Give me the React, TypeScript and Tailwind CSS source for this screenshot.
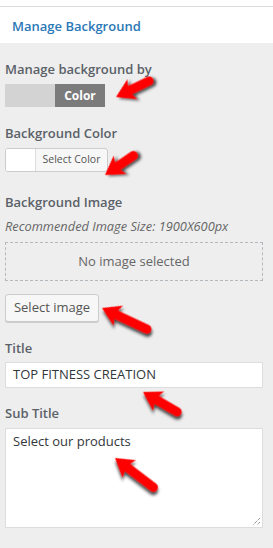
import React from "react";

type A = { tip: [number, number]; tail: [number, number] };

const arrows: A[] = [
  { tip: [116, 97], tail: [153, 79] },
  { tip: [105, 175], tail: [137, 153] },
  { tip: [102, 308], tail: [151, 331] },
  { tip: [143, 392], tail: [181, 414] },
  { tip: [115, 458], tail: [157, 490] },
];

function Arrow({ tip, tail }: A) {
  const dx = tail[0] - tip[0];
  const dy = tail[1] - tip[1];
  const len = Math.sqrt(dx * dx + dy * dy);
  const ang = (Math.atan2(dy, dx) * 180) / Math.PI;
  const s = 4.5;
  const d = `M0 0 L18 -11 L15.5 -${s} L${len - s} -${s} A${s} ${s} 0 0 1 ${len - s} ${s} L15.5 ${s} L18 11 Z`;
  return (
    <g transform={`translate(${tip[0]} ${tip[1]}) rotate(${ang})`}>
      <path d={d} fill="#ff0000" filter="url(#sh)" />
    </g>
  );
}

const label = "text-[13px] leading-5 font-semibold text-[#5a6168]";

export default function App() {
  return (
    <div
      className="relative w-[273px] h-[548px] bg-white overflow-hidden"
      style={{ fontFamily: '"Open Sans", "Noto Sans", sans-serif' }}
    >
      <div className="pt-[6px] bg-white">
        <div className="border-t border-[#dddddd] h-[37px] pl-[12px] pt-[6px]">
          <span className="text-[13px] leading-5 font-semibold text-[#2b78b6]">Manage Background</span>
        </div>
      </div>
      <div className="bg-[#eeeeee] h-[505px] pl-[5px] pr-[10px] pt-[16px] flex flex-col">
        <div className={label}>Manage background by</div>
        <div className="mt-[5px] flex w-[100px] h-[23px]">
          <div className="w-[50px] bg-[#d3d3d3]" />
          <div className="w-[50px] bg-[#7b7b7b] text-white text-[12px] font-bold flex items-center justify-center">
            Color
          </div>
        </div>

        <div className={`${label} mt-[16px]`}>Background Color</div>
        <div className="mt-[5px] flex w-[103px] h-[24px] border border-[#cccccc] rounded-[3px] bg-[#f7f7f7] overflow-hidden">
          <div className="w-[30px] bg-white border-r border-[#dddddd]" />
          <div className="flex-1 flex items-center justify-center text-[10.5px] text-[#555555]">Select Color</div>
        </div>

        <div className={`${label} mt-[20px]`}>Background Image</div>
        <div className="mt-[6px] text-[12.8px] leading-4 italic text-[#666666]">
          Recommended Image Size: 1900X600px
        </div>
        <div className="mt-[8px] h-[39px] border border-dashed border-[#b4b9be] flex items-center justify-center text-[13px] text-[#666666]">
          No image selected
        </div>
        <div className="mt-[13px] w-[94px] h-[28px] border border-[#cccccc] rounded-[3px] bg-[#f7f7f7] shadow-[0_1px_0_#cccccc] flex items-center justify-center text-[13px] text-[#555555]">
          Select image
        </div>

        <div className={`${label} mt-[16px]`}>Title</div>
        <div className="mt-[4px] h-[26px] border border-[#dddddd] bg-white flex items-center pl-[7px] text-[13px] text-[#32373c]">
          TOP FITNESS CREATION
        </div>

        <div className={`${label} mt-[15px]`}>Sub Title</div>
        <div className="relative mt-[5px] h-[100px] border border-[#dddddd] bg-white pl-[7px] pt-[2px] text-[13px] leading-5 text-[#32373c]">
          Select our products
          <svg className="absolute right-[1px] bottom-[1px]" width="9" height="9" viewBox="0 0 9 9">
            <path d="M8 1 L1 8 M8 5 L5 8" stroke="#666" strokeWidth="1" strokeDasharray="1 1" />
          </svg>
        </div>
      </div>

      <svg className="absolute inset-0 pointer-events-none" width="273" height="548">
        <defs>
          <filter id="sh" x="-30%" y="-30%" width="160%" height="160%">
            <feDropShadow dx="2" dy="2.5" stdDeviation="1.5" floodColor="#000" floodOpacity="0.75" />
          </filter>
        </defs>
        {arrows.map((a, i) => (
          <Arrow key={i} {...a} />
        ))}
      </svg>
    </div>
  );
}
